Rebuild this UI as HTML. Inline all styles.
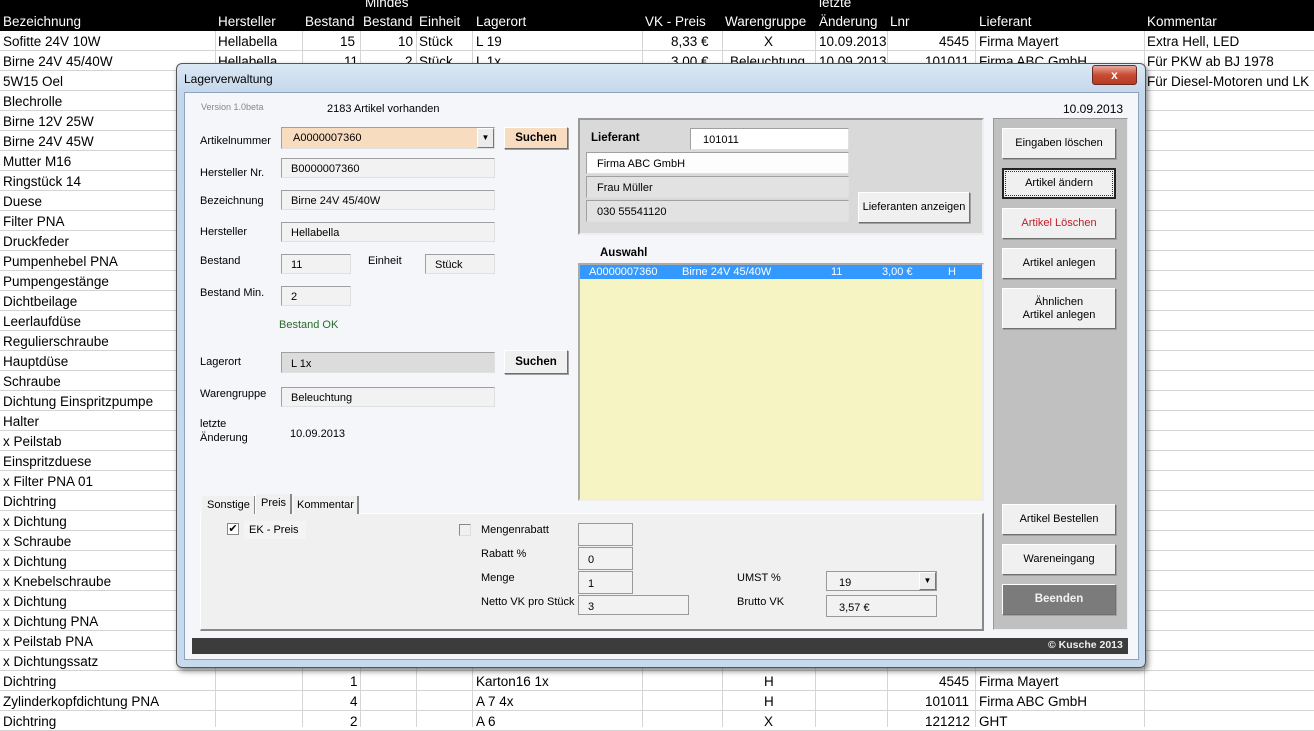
<!DOCTYPE html>
<html><head><meta charset="utf-8"><style>
*{box-sizing:border-box;margin:0;padding:0}
body{width:1314px;height:727px;overflow:hidden;background:#fff;font-family:"Liberation Sans",sans-serif;position:relative}
.hdr{position:absolute;left:0;top:0;width:1314px;height:31px;background:#000;color:#fff;font-size:13.5px}
.hdr span,.cell{position:absolute;white-space:nowrap}
.cell{margin-top:1px}
.row{position:absolute;left:0;width:1314px;height:20px;border-bottom:1px solid #d4d4d4;font-size:13.5px;color:#000}
.vl{position:absolute;top:31px;height:696px;width:1px;background:#d4d4d4}
.a{position:absolute;white-space:nowrap;font-size:11px;color:#000}
.in{position:absolute;background:#f2f2f2;border:1px solid #a0a0a0;border-right-color:#e0e0e0;border-bottom-color:#e0e0e0;font-size:11px;padding:5px 0 0 9px;white-space:nowrap}
.btn{position:absolute;background:#f0f0f0;border:1px solid #fff;border-right-color:#707070;border-bottom-color:#707070;box-shadow:1px 1px 0 #a0a0a0;font-size:11px;text-align:center;display:flex;align-items:center;justify-content:center;line-height:13px}
</style></head><body>
<div class="hdr">
<span style="left:365px;top:-5px">Mindes</span>
<span style="left:819px;top:-5px">letzte</span>
<span style="left:3px;top:14px">Bezeichnung</span>
<span style="left:218px;top:14px">Hersteller</span>
<span style="left:305px;top:14px">Bestand</span>
<span style="left:363px;top:14px">Bestand</span>
<span style="left:419px;top:14px">Einheit</span>
<span style="left:476px;top:14px">Lagerort</span>
<span style="left:645px;top:14px">VK - Preis</span>
<span style="left:725px;top:14px">Warengruppe</span>
<span style="left:819px;top:14px">Änderung</span>
<span style="left:890px;top:14px">Lnr</span>
<span style="left:979px;top:14px">Lieferant</span>
<span style="left:1147px;top:14px">Kommentar</span>
</div>
<div class="vl" style="left:215px"></div><div class="vl" style="left:302px"></div><div class="vl" style="left:360px"></div><div class="vl" style="left:416px"></div><div class="vl" style="left:472px"></div><div class="vl" style="left:642px"></div><div class="vl" style="left:722px"></div><div class="vl" style="left:815px"></div><div class="vl" style="left:887px"></div><div class="vl" style="left:975px"></div><div class="vl" style="left:1144px"></div>
<div id="rows"></div>
<script>
var n=["Sofitte 24V 10W","Birne 24V 45/40W","5W15 Oel","Blechrolle","Birne 12V 25W","Birne 24V 45W","Mutter M16","Ringstück 14","Duese","Filter PNA","Druckfeder","Pumpenhebel  PNA","Pumpengestänge","Dichtbeilage","Leerlaufdüse","Regulierschraube","Hauptdüse","Schraube","Dichtung Einspritzpumpe","Halter","x Peilstab","Einspritzduese","x Filter PNA 01","Dichtring","x Dichtung","x Schraube","x Dichtung","x Knebelschraube","x Dichtung","x Dichtung PNA","x Peilstab PNA","x Dichtungssatz","Dichtring","Zylinderkopfdichtung PNA","Dichtring"];
var h="";
for(var i=0;i<n.length;i++){h+='<div class="row" style="top:'+(31+i*20)+'px"><span class="cell" style="left:3px;top:2px">'+n[i]+'</span></div>';}
document.getElementById("rows").innerHTML=h;
</script>
<div class="cell" style="left:218px;top:33px;font-size:13.5px">Hellabella</div>
<div class="cell" style="left:340px;top:33px;font-size:13.5px">15</div>
<div class="cell" style="left:398px;top:33px;font-size:13.5px">10</div>
<div class="cell" style="left:419px;top:33px;font-size:13.5px">Stück</div>
<div class="cell" style="left:476px;top:33px;font-size:13.5px">L  19</div>
<div class="cell" style="left:671px;top:33px;font-size:13.5px">8,33 €</div>
<div class="cell" style="left:764px;top:33px;font-size:13.5px">X</div>
<div class="cell" style="left:819px;top:33px;font-size:13.5px">10.09.2013</div>
<div class="cell" style="left:939px;top:33px;font-size:13.5px">4545</div>
<div class="cell" style="left:979px;top:33px;font-size:13.5px">Firma Mayert</div>
<div class="cell" style="left:1147px;top:33px;font-size:13.5px">Extra Hell, LED</div>
<div class="cell" style="left:218px;top:53px;font-size:13.5px">Hellabella</div>
<div class="cell" style="left:344px;top:53px;font-size:13.5px">11</div>
<div class="cell" style="left:405px;top:53px;font-size:13.5px">2</div>
<div class="cell" style="left:419px;top:53px;font-size:13.5px">Stück</div>
<div class="cell" style="left:476px;top:53px;font-size:13.5px">L 1x</div>
<div class="cell" style="left:671px;top:53px;font-size:13.5px">3,00 €</div>
<div class="cell" style="left:730px;top:53px;font-size:13.5px">Beleuchtung</div>
<div class="cell" style="left:819px;top:53px;font-size:13.5px">10.09.2013</div>
<div class="cell" style="left:925px;top:53px;font-size:13.5px">101011</div>
<div class="cell" style="left:979px;top:53px;font-size:13.5px">Firma ABC GmbH</div>
<div class="cell" style="left:1147px;top:53px;font-size:13.5px">Für PKW ab BJ 1978</div>
<div class="cell" style="left:1147px;top:73px;font-size:13.5px">Für Diesel-Motoren und LK</div>
<div class="cell" style="left:350px;top:673px;font-size:13.5px">1</div><div class="cell" style="left:476px;top:673px;font-size:13.5px">Karton16   1x</div><div class="cell" style="left:764px;top:673px;font-size:13.5px">H</div><div class="cell" style="left:939px;top:673px;font-size:13.5px">4545</div><div class="cell" style="left:979px;top:673px;font-size:13.5px">Firma Mayert</div>
<div class="cell" style="left:350px;top:693px;font-size:13.5px">4</div><div class="cell" style="left:476px;top:693px;font-size:13.5px">A 7  4x</div><div class="cell" style="left:764px;top:693px;font-size:13.5px">H</div><div class="cell" style="left:925px;top:693px;font-size:13.5px">101011</div><div class="cell" style="left:979px;top:693px;font-size:13.5px">Firma ABC GmbH</div>
<div class="cell" style="left:350px;top:713px;font-size:13.5px">2</div><div class="cell" style="left:476px;top:713px;font-size:13.5px">A 6</div><div class="cell" style="left:764px;top:713px;font-size:13.5px">X</div><div class="cell" style="left:925px;top:713px;font-size:13.5px">121212</div><div class="cell" style="left:979px;top:713px;font-size:13.5px">GHT</div>

<!-- dialog -->
<div style="position:absolute;left:176px;top:63px;width:970px;height:605px;border:1px solid #555;border-radius:6px;background:linear-gradient(#dbe8f5,#c3d6ea 30px,#c6d9ed);box-shadow:2px 3px 6px rgba(0,0,0,.5)"></div>
<div class="a" style="left:184px;top:72px;font-size:12px">Lagerverwaltung</div>
<div style="position:absolute;left:1092px;top:65px;width:45px;height:20px;border:1px solid #6d2a20;border-radius:3px;background:linear-gradient(#e9a99a,#c74c34 50%,#b83a22);color:#fff;font-weight:bold;font-size:12px;text-align:center;line-height:18px">x</div>
<div style="position:absolute;left:184px;top:92px;width:955px;height:568px;background:#f4f6f9;border:1px solid #8ea4bd"></div>

<div class="a" style="left:201px;top:102px;font-size:9px;color:#888">Version 1.0beta</div>
<div class="a" style="left:327px;top:103px">2183 Artikel vorhanden</div>
<div class="a" style="left:1063px;top:102px;font-size:12px">10.09.2013</div>

<div class="a" style="left:200px;top:135px">Artikelnummer</div>
<div class="in" style="left:281px;top:127px;width:214px;height:22px;background:#f8dcc0;padding-left:11px;padding-top:4px">A0000007360</div>
<div style="position:absolute;left:477px;top:128px;width:17px;height:20px;background:#ececec;border:1px solid #fff;border-right-color:#777;border-bottom-color:#777;font-size:8px;text-align:center;line-height:18px">▼</div>
<div class="btn" style="left:504px;top:127px;width:64px;height:22px;background:#f8dcc0;font-weight:bold;font-size:11.5px">Suchen</div>

<div class="a" style="left:200px;top:167px">Hersteller Nr.</div>
<div class="in" style="left:281px;top:158px;width:214px;height:20px;padding-top:4px">B0000007360</div>
<div class="a" style="left:200px;top:195px">Bezeichnung</div>
<div class="in" style="left:281px;top:190px;width:214px;height:20px;padding-top:4px">Birne 24V 45/40W</div>
<div class="a" style="left:200px;top:226px">Hersteller</div>
<div class="in" style="left:281px;top:222px;width:214px;height:20px;padding-top:4px">Hellabella</div>
<div class="a" style="left:200px;top:255px">Bestand</div>
<div class="in" style="left:281px;top:254px;width:70px;height:20px;padding-top:4px">11</div>
<div class="a" style="left:368px;top:255px">Einheit</div>
<div class="in" style="left:425px;top:254px;width:70px;height:20px;padding-top:4px">Stück</div>
<div class="a" style="left:200px;top:287px">Bestand Min.</div>
<div class="in" style="left:281px;top:286px;width:70px;height:20px;padding-top:4px">2</div>
<div class="a" style="left:279px;top:319px;color:#2a6a2a">Bestand OK</div>
<div class="a" style="left:200px;top:356px">Lagerort</div>
<div class="in" style="left:281px;top:352px;width:214px;height:21px;background:#dcdcdc;padding-top:5px">L 1x</div>
<div class="btn" style="left:504px;top:350px;width:64px;height:24px;font-weight:bold;font-size:11.5px">Suchen</div>
<div class="a" style="left:200px;top:388px">Warengruppe</div>
<div class="in" style="left:281px;top:387px;width:214px;height:20px;padding-top:4px">Beleuchtung</div>
<div class="a" style="left:200px;top:417px;line-height:14px">letzte<br>Änderung</div>
<div class="a" style="left:290px;top:428px">10.09.2013</div>

<!-- Lieferant panel -->
<div style="position:absolute;left:578px;top:118px;width:406px;height:117px;background:#d9d9d9;border:2px solid #999;border-right-color:#eee;border-bottom-color:#eee"></div>
<div class="a" style="left:591px;top:132px;font-weight:bold;font-size:11.5px">Lieferant</div>
<div class="in" style="left:690px;top:128px;width:159px;height:22px;background:#fff;padding-left:12px">101011</div>
<div class="in" style="left:586px;top:152px;width:263px;height:22px;background:#fdfdfd;padding-left:10px">Firma ABC GmbH</div>
<div class="in" style="left:586px;top:176px;width:263px;height:22px;background:#e2e2e2;padding-left:10px">Frau Müller</div>
<div class="in" style="left:586px;top:200px;width:263px;height:22px;background:#e2e2e2;padding-left:10px">030 55541120</div>
<div class="btn" style="left:858px;top:192px;width:112px;height:31px">Lieferanten anzeigen</div>

<div class="a" style="left:600px;top:247px;font-weight:bold;font-size:11.5px">Auswahl</div>
<div style="position:absolute;left:578px;top:263px;width:406px;height:238px;background:#f6f4c2;border:2px solid #aaa;border-right-color:#eee;border-bottom-color:#eee"></div>
<div style="position:absolute;left:580px;top:265px;width:402px;height:14px;background:#3399ff"></div>
<div class="a" style="left:589px;top:266px;color:#fff">A0000007360</div>
<div class="a" style="left:682px;top:266px;color:#fff">Birne 24V 45/40W</div>
<div class="a" style="left:831px;top:266px;color:#fff">11</div>
<div class="a" style="left:882px;top:266px;color:#fff">3,00 €</div>
<div class="a" style="left:948px;top:266px;color:#fff">H</div>

<!-- right panel -->
<div style="position:absolute;left:993px;top:118px;width:135px;height:512px;background:#c0c0c0;border:1px solid #999;border-right-color:#eee;border-bottom-color:#eee"></div>
<div class="btn" style="left:1002px;top:128px;width:114px;height:31px">Eingaben löschen</div>
<div class="btn" style="left:1002px;top:168px;width:114px;height:31px;border:2px solid #222;box-shadow:none;outline:1px dotted #333;outline-offset:-4px">Artikel ändern</div>
<div class="btn" style="left:1002px;top:208px;width:114px;height:31px;color:#c0202a">Artikel Löschen</div>
<div class="btn" style="left:1002px;top:248px;width:114px;height:31px">Artikel anlegen</div>
<div class="btn" style="left:1002px;top:288px;width:114px;height:41px">Ähnlichen<br>Artikel anlegen</div>
<div class="btn" style="left:1002px;top:504px;width:114px;height:31px">Artikel Bestellen</div>
<div class="btn" style="left:1002px;top:544px;width:114px;height:31px">Wareneingang</div>
<div class="btn" style="left:1002px;top:584px;width:114px;height:31px;background:#7b7b7b;color:#f2f2f2;font-weight:bold;font-size:11.5px">Beenden</div>

<!-- tabs -->
<div style="position:absolute;left:200px;top:513px;width:784px;height:118px;background:#f0f0f0;border:1px solid #fff;border-right:2px solid #888;border-bottom:2px solid #888"></div>
<div class="a" style="left:202px;top:496px;width:53px;height:18px;background:#f0f0f0;padding:3px 0 0 5px;border-right:1px solid #888">Sonstige</div>
<div class="a" style="left:255px;top:494px;width:37px;height:20px;background:#f0f0f0;padding:3px 0 0 5px;border-right:2px solid #888;border-left:1px solid #fff">Preis</div>
<div class="a" style="left:294px;top:496px;width:65px;height:18px;background:#f0f0f0;padding:3px 0 0 3px;border-right:2px solid #888">Kommentar</div>
<div style="position:absolute;left:227px;top:523px;width:12px;height:12px;border:1px solid #888;background:#fff;font-size:11px;line-height:10px;text-align:center">✔</div>
<div class="a" style="left:244px;top:521px;width:62px;height:18px;background:#f4f4f4;padding:3px 0 0 5px">EK - Preis</div>
<div style="position:absolute;left:459px;top:524px;width:12px;height:12px;border:1px solid #888;border-right-color:#ddd;border-bottom-color:#ddd"></div>
<div class="a" style="left:481px;top:524px">Mengenrabatt</div>
<div class="a" style="left:481px;top:548px">Rabatt %</div>
<div class="a" style="left:481px;top:572px">Menge</div>
<div class="a" style="left:481px;top:596px">Netto VK pro Stück</div>
<div class="in" style="left:578px;top:523px;width:55px;height:23px;border-color:#999"></div>
<div class="in" style="left:578px;top:547px;width:55px;height:23px;border-color:#999;padding-top:6px">0</div>
<div class="in" style="left:578px;top:571px;width:55px;height:23px;border-color:#999;padding-top:6px">1</div>
<div class="in" style="left:578px;top:595px;width:111px;height:20px;border-color:#999;padding-top:5px">3</div>
<div class="a" style="left:737px;top:572px">UMST %</div>
<div class="a" style="left:737px;top:596px">Brutto VK</div>
<div class="in" style="left:826px;top:571px;width:111px;height:20px;border-color:#999;padding-top:5px;padding-left:12px">19</div>
<div style="position:absolute;left:919px;top:572px;width:17px;height:18px;background:#ececec;border:1px solid #fff;border-right-color:#777;border-bottom-color:#777;font-size:8px;text-align:center;line-height:16px">▼</div>
<div class="in" style="left:826px;top:595px;width:111px;height:22px;border-color:#999;padding-top:6px;padding-left:12px">3,57 €</div>

<div style="position:absolute;left:192px;top:638px;width:936px;height:16px;background:#3c3c3c"></div>
<div class="a" style="left:1048px;top:639px;color:#eee;font-weight:bold;font-size:10.5px">© Kusche 2013</div>
</body></html>
